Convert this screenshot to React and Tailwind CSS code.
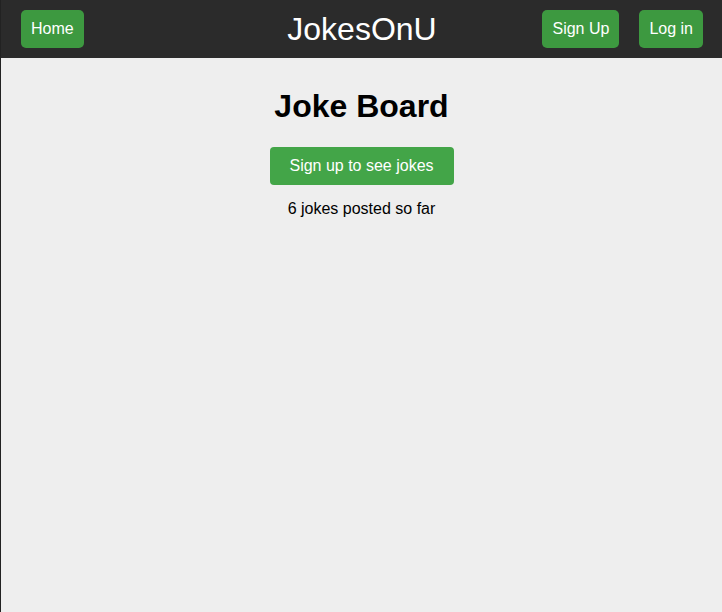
export default function App() {
  return (
    <div className="min-h-screen bg-[#eeeeee] border-l border-[#222] font-['Liberation_Sans',Arial,sans-serif]">
      {/* Nav */}
      <header className="h-[58px] bg-[#2b2b2b] grid grid-cols-[1fr_auto_1fr] items-center pl-5 pr-[19px]">
        <div className="flex">
          <button className="h-[38px] px-[10px] rounded-[5px] bg-[#3d9940] text-white text-base">Home</button>
        </div>
        <div className="text-white text-[32px] leading-none">JokesOnU</div>
        <div className="flex justify-end gap-5">
          <button className="h-[38px] px-[10px] rounded-[5px] bg-[#3d9940] text-white text-base">Sign Up</button>
          <button className="h-[38px] px-[10px] rounded-[5px] bg-[#3d9940] text-white text-base">Log in</button>
        </div>
      </header>

      {/* Board */}
      <main className="flex flex-col items-center pt-[30px]">
        <h1 className="text-[32px] leading-[37px] font-bold text-black">Joke Board</h1>
        <button className="mt-[22px] h-[38px] w-[184px] rounded-[4px] bg-[#43a548] text-white text-base">
          Sign up to see jokes
        </button>
        <p className="mt-[15px] text-base leading-[18px] text-black">6 jokes posted so far</p>
      </main>
    </div>
  )
}
